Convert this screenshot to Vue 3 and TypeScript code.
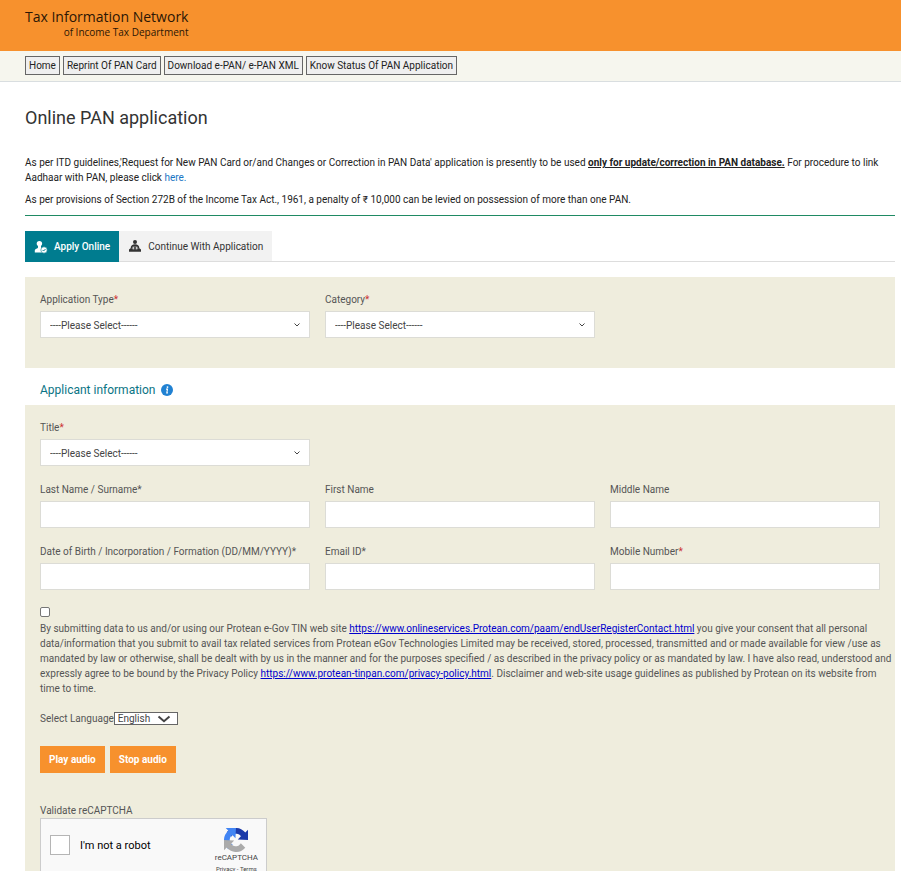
<script setup lang="ts">
import { reactive, ref } from 'vue'

interface Field {
  id: string
  label: string
  required: boolean
  muted?: boolean
}

const navItems = ['Home', 'Reprint Of PAN Card', 'Download e-PAN/ e-PAN XML', 'Know Status Of PAN Application']

const typeFields: Field[] = [
  { id: 'applicationType', label: 'Application Type', required: true },
  { id: 'category', label: 'Category', required: true },
]

const textFields: Field[] = [
  { id: 'lastName', label: 'Last Name / Surname', required: true, muted: true },
  { id: 'firstName', label: 'First Name', required: false },
  { id: 'middleName', label: 'Middle Name', required: false },
  { id: 'birthDate', label: 'Date of Birth / Incorporation / Formation (DD/MM/YYYY)', required: true, muted: true },
  { id: 'email', label: 'Email ID', required: true, muted: true },
  { id: 'mobile', label: 'Mobile Number', required: true },
]

const values = reactive<Record<string, string>>({
  applicationType: '',
  category: '',
  title: '',
  lastName: '',
  firstName: '',
  middleName: '',
  birthDate: '',
  email: '',
  mobile: '',
})
const consent = ref(false)
const human = ref(false)
const language = ref('English')
</script>

<template>
  <div class="page">
    <header class="banner">
      <div class="brand">
        <span class="brand-name">Tax Information Network</span>
        <span class="brand-sub">of Income Tax Department</span>
      </div>
    </header>

    <nav class="nav">
      <button v-for="item in navItems" :key="item" type="button" class="nav-button">{{ item }}</button>
    </nav>

    <main class="content">
      <h1 class="heading">Online PAN application</h1>

      <section class="intro">
        <p>
          As per ITD guidelines,'Request for New PAN Card or/and Changes or Correction in PAN Data' application is
          presently to be used <strong>only for update/correction in PAN database.</strong> For procedure to link
          Aadhaar with PAN, please click <a class="here" href="#">here.</a>
        </p>
        <p>
          As per provisions of Section 272B of the Income Tax Act., 1961, a penalty of ₹ 10,000 can be levied on
          possession of more than one PAN.
        </p>
      </section>

      <div class="tabs">
        <button type="button" class="tab active">
          <svg class="tab-icon" viewBox="0 0 14 14" aria-hidden="true">
            <circle cx="5.4" cy="3.6" r="2.7" fill="#fff" />
            <path d="M4 5h3v3l2 .7V12.500H.8v-2C.8 8.700 4 8.500 4 7.500z" fill="#fff" />
            <circle cx="10" cy="10" r="3.200" fill="#fff" stroke="#007c8f" stroke-width=".6" />
            <path d="M8.600 10l1 1 1.900-2" fill="none" stroke="#007c8f" stroke-width=".9" />
          </svg>
          Apply Online
        </button>
        <button type="button" class="tab">
          <svg class="tab-icon" viewBox="0 0 14 14" aria-hidden="true">
            <circle cx="7" cy="2.900" r="2" fill="#333" />
            <path d="M2.600 9.500C2.600 6.500 4.500 5.300 7 5.300s4.400 1.200 4.400 4.200z" fill="#333" />
            <path d="M2.600 9.300h8.800l1.600 1.200v2.300H1v-2.300z" fill="#333" />
            <path d="M4.600 7.700h4.800v2.600H4.600z" fill="#f2f2f2" />
            <path d="M7 7.700v3.300M5.600 9h2.800" stroke="#333" stroke-width="1.200" />
          </svg>
          Continue With Application
        </button>
      </div>

      <form @submit.prevent>
        <section class="panel type-panel">
          <div class="grid">
            <div v-for="f in typeFields" :key="f.id" class="field">
              <label :for="f.id">{{ f.label }}<span class="star">*</span></label>
              <div class="select-wrap">
                <select :id="f.id" v-model="values[f.id]" class="control">
                  <option value="">----Please Select------</option>
                </select>
                <svg class="chevron" viewBox="0 0 8 8" aria-hidden="true"><path d="M1.500 2.500 4 5l2.500-2.500" /></svg>
              </div>
            </div>
          </div>
        </section>

        <h2 class="section-title">
          Applicant information
          <svg class="info" viewBox="0 0 12 12" aria-hidden="true">
            <circle cx="6" cy="6" r="6" fill="#2081d2" />
            <circle cx="6.500" cy="3.100" r=".9" fill="#fff" />
            <path d="M5 5.100h1.500L5.800 8.900h1.100" fill="none" stroke="#fff" stroke-width="1.100" />
          </svg>
        </h2>

        <section class="panel info-panel">
          <div class="grid">
            <div class="field title-field">
              <label for="title">Title<span class="star">*</span></label>
              <div class="select-wrap">
                <select id="title" v-model="values.title" class="control">
                  <option value="">----Please Select------</option>
                </select>
                <svg class="chevron" viewBox="0 0 8 8" aria-hidden="true"><path d="M1.500 2.500 4 5l2.500-2.500" /></svg>
              </div>
            </div>
            <div v-for="f in textFields" :key="f.id" class="field">
              <label :for="f.id">{{ f.label }}<span v-if="f.required" :class="f.muted ? '' : 'star'">*</span></label>
              <input :id="f.id" v-model="values[f.id]" type="text" class="control" />
            </div>
          </div>

          <div class="consent">
            <input id="consent" v-model="consent" type="checkbox" class="tick" />
            <label for="consent" class="consent-text">
              By submitting data to us and/or using our Protean e-Gov TIN web site
              <a href="#">https://www.onlineservices.Protean.com/paam/endUserRegisterContact.html</a> you give your
              consent that all personal data/information that you submit to avail tax related services from Protean
              eGov Technologies Limited may be received, stored, processed, transmitted and or made available for view
              /use as mandated by law or otherwise, shall be dealt with by us in the manner and for the purposes
              specified / as described in the privacy policy or as mandated by law. I have also read, understood and
              expressly agree to be bound by the Privacy Policy
              <a href="#">https://www.protean-tinpan.com/privacy-policy.html</a>. Disclaimer and web-site usage
              guidelines as published by Protean on its website from time to time.
            </label>
          </div>

          <div class="language">
            <label for="language">Select Language</label>
            <div class="select-wrap">
              <select id="language" v-model="language" class="language-select">
                <option>English</option>
              </select>
              <svg class="language-arrow" viewBox="0 0 14 8" aria-hidden="true"><path d="M1.500 1.500 7 6.200l5.500-4.700" /></svg>
            </div>
          </div>

          <div class="audio">
            <button type="button" class="audio-button">Play audio</button>
            <button type="button" class="audio-button">Stop audio</button>
          </div>

          <p class="captcha-label">Validate reCAPTCHA</p>
          <div class="captcha">
            <input id="human" v-model="human" type="checkbox" class="captcha-box" />
            <label for="human" class="captcha-text">I'm not a robot</label>
            <div class="captcha-brand">
              <svg class="captcha-logo" viewBox="0 0 64 64" aria-hidden="true">
                <path d="M64 32c0-.5 0-.9 0-1.400V4.600l-7.200 7.200A32 32 0 0 0 7.300 11.500l11.800 11.900A15.600 15.600 0 0 1 23.900 18c2-1.600 4.800-2.800 8.700-2.800.5 0 .8 0 1.100.2 4.800.4 9 3 11.400 6.900L36.800 30.600z" fill="#1c3aa9" />
                <path d="M31.900 0H4.600l7.200 7.200A32 32 0 0 0 11.500 56.700l11.900-11.800A15.600 15.600 0 0 1 18 40.100c-1.600-2-2.800-4.800-2.800-8.700 0-.5 0-.8.2-1.100.4-4.800 3-9 6.900-11.400L30.600 27.200z" fill="#4285f4" />
                <path d="M0 32v27.400l7.200-7.200A32 32 0 0 0 56.700 52.500L44.900 40.600A15.600 15.600 0 0 1 40.100 46c-2 1.600-4.800 2.800-8.700 2.800-.5 0-.8 0-1.100-.2-4.800-.4-9-3-11.400-6.900L27.200 33.400z" fill="#ababab" />
              </svg>
              <span class="captcha-name">reCAPTCHA</span>
              <span class="captcha-terms">Privacy - Terms</span>
            </div>
          </div>
        </section>
      </form>
    </main>
  </div>
</template>

<style>
body {
  margin: 0;
  background: #fff;
}
</style>

<style scoped>
.page {
  font-family: Roboto, "Liberation Sans", sans-serif;
  font-size: 10px;
  line-height: 15px;
  color: #222;
}
.page * {
  box-sizing: border-box;
}
button,
input,
select {
  font: inherit;
  margin: 0;
}
.banner {
  display: flex;
  height: 51px;
  padding: 9px 25px;
  background: #f7912d;
}
.brand {
  display: flex;
  flex-direction: column;
  align-items: flex-end;
  font-family: "Open Sans", "Noto Sans", sans-serif;
  color: #2b1605;
}
.brand-name {
  font-size: 14px;
  line-height: 16px;
}
.brand-sub {
  font-size: 10px;
  line-height: 14px;
  font-weight: 500;
}
.nav {
  display: flex;
  gap: 3px;
  padding: 5px 25px 6px;
  background: #f6f6ee;
  border-bottom: 1px solid #d9dee0;
}
.nav-button {
  height: 19px;
  padding: 0 3px;
  border: 1px solid #666;
  background: #efefef;
  color: #222;
  line-height: 17px;
}
.content {
  padding: 0 6px 0 25px;
}
.heading {
  margin: 0;
  padding: 24px 0 25px;
  font-size: 18px;
  line-height: 24px;
  font-weight: 400;
  color: #333;
}
.intro {
  border-bottom: 1px solid #1f8a63;
  padding-bottom: 8px;
}
.intro p {
  margin: 0 0 7px;
}
.intro p:last-child {
  margin: 0;
}
strong {
  font-weight: 700;
  text-decoration: underline;
}
.here {
  color: #1b76c4;
  text-decoration: none;
}
.tabs {
  display: flex;
  height: 31px;
  margin-top: 15px;
  border-bottom: 1px solid #ddd;
}
.tab {
  display: flex;
  align-items: center;
  gap: 6px;
  height: 30px;
  padding: 0 9px;
  border: 0;
  background: #f2f2f2;
  color: #333;
}
.tab.active {
  height: 31px;
  background: #007c8f;
  color: #fff;
  font-weight: 500;
}
.tab-icon {
  width: 14px;
  height: 14px;
}
.panel {
  background: #efeddd;
  padding: 15px;
}
.type-panel {
  margin-top: 15px;
  padding-bottom: 30px;
}
.grid {
  display: grid;
  grid-template-columns: repeat(3, minmax(0, 1fr));
  gap: 16px 15px;
}
.field {
  display: flex;
  flex-direction: column;
  gap: 4px;
  color: #555;
}
.title-field {
  grid-column: 1 / -1;
  width: calc((100% - 30px) / 3);
}
.star {
  color: #c33;
}
.control {
  display: block;
  width: 100%;
  height: 27px;
  padding: 1px 9px 0;
  border: 1px solid #dcdcd6;
  border-radius: 0;
  background: #fff;
  color: #444;
  appearance: none;
}
.select-wrap {
  position: relative;
}
.chevron {
  position: absolute;
  right: 9px;
  top: 10px;
  width: 8px;
  height: 8px;
  pointer-events: none;
}
.chevron path,
.language-arrow path {
  fill: none;
  stroke: #444;
  stroke-width: 1;
}
.section-title {
  display: flex;
  align-items: center;
  gap: 6px;
  margin: 0;
  padding: 12px 15px 5px;
  font-size: 12px;
  line-height: 20px;
  font-weight: 400;
  color: #0a7484;
}
.info {
  width: 12px;
  height: 12px;
}
.consent {
  display: flex;
  flex-direction: column;
  gap: 4px;
  margin: 17px -14px 0 0;
  color: #555;
}
.tick {
  width: 10px;
  height: 10px;
  appearance: none;
  border: 1px solid #767676;
  border-radius: 2px;
  background: #fff;
}
.consent-text a {
  color: #00c;
}
.language {
  display: flex;
  align-items: center;
  margin-top: 15px;
  color: #555;
}
.language-select {
  display: block;
  width: 64px;
  height: 13px;
  padding: 0 3px;
  border: 1px solid #666;
  border-radius: 0;
  background: #fff;
  color: #444;
  line-height: 11px;
  appearance: none;
}
.language-arrow {
  position: absolute;
  right: 7px;
  top: 3px;
  width: 14px;
  height: 8px;
  pointer-events: none;
}
.language-arrow path {
  stroke-width: 2;
}
.audio {
  display: flex;
  gap: 5px;
  margin-top: 20px;
}
.audio-button {
  height: 27px;
  padding: 0 9px;
  border: 0;
  background: #f7912d;
  color: #fff;
  font-weight: 700;
}
.captcha-label {
  margin: 30px 0 0;
  color: #555;
}
.captcha {
  display: flex;
  align-items: flex-start;
  width: 227px;
  height: 58px;
  padding: 7px 8px 0 9px;
  border: 1px solid #ccc;
  background: #f9f9f9;
}
.captcha-box {
  width: 20px;
  height: 20px;
  margin-top: 9px;
  appearance: none;
  border: 1px solid #b5b5b5;
  background: #fff;
}
.captcha-text {
  flex: 1;
  margin: 12px 0 0 10px;
  font-size: 11px;
  color: #000;
}
.captcha-brand {
  display: flex;
  flex-direction: column;
  align-items: center;
  padding-top: 2px;
  color: #444;
}
.captcha-logo {
  width: 24px;
  height: 24px;
}
.captcha-name {
  font-size: 8px;
  line-height: 12px;
}
.captcha-terms {
  font-size: 6px;
  line-height: 9px;
}
</style>
